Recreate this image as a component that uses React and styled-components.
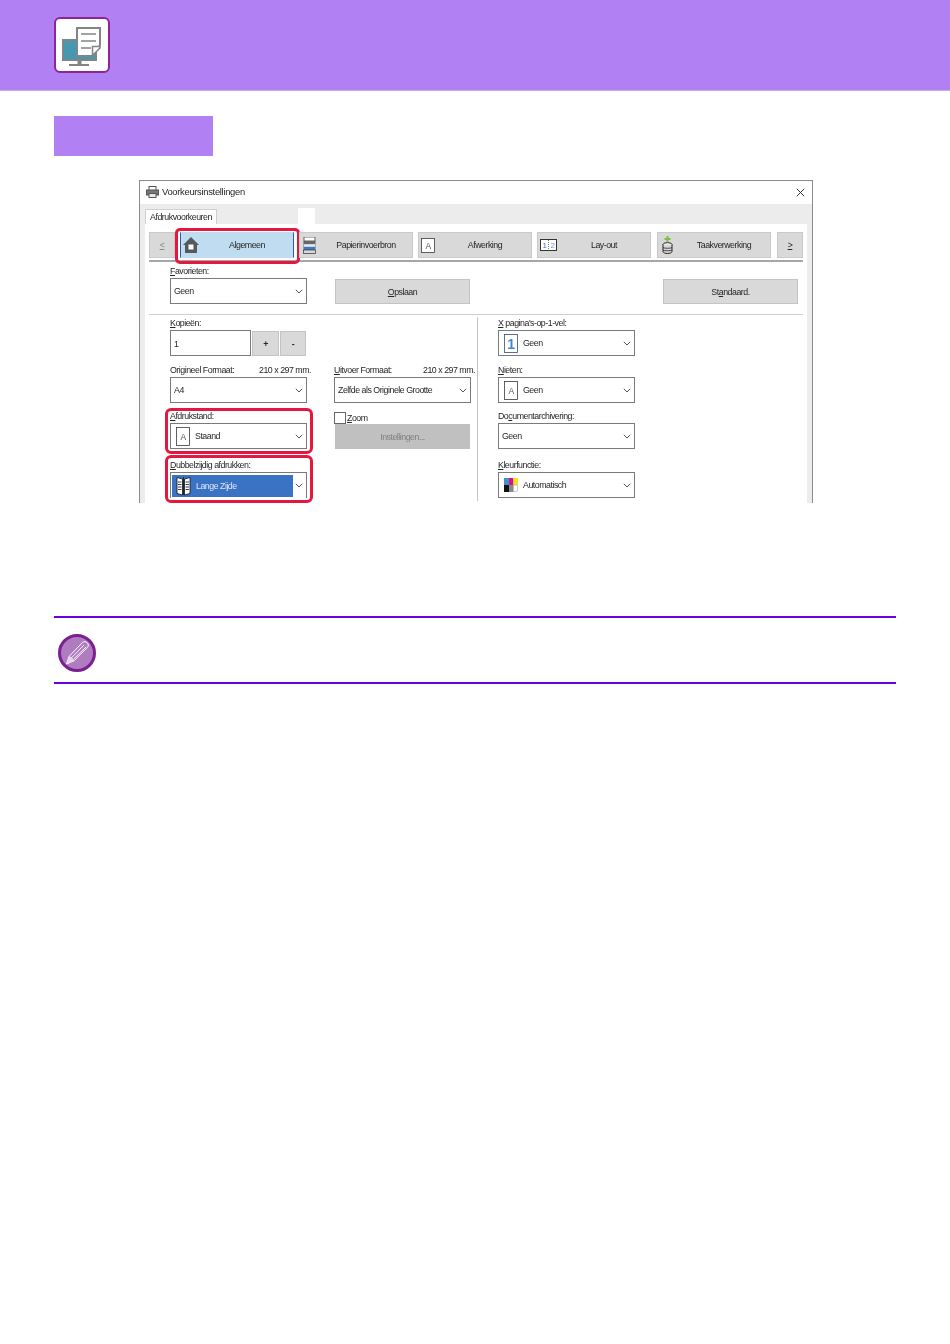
import styled, { createGlobalStyle } from "styled-components";

const GlobalStyle = createGlobalStyle`
html,body{margin:0;padding:0;background:#fff;}
body{font-family:"Liberation Sans",Arial,sans-serif;}
`
const Page = styled.div`
width:950px;
height:1344px;
overflow:hidden;
display:flex;
flex-direction:column;
`
const Header = styled.header`
height:91px;
box-sizing:border-box;
flex:none;
background:#b180f2;
border-bottom:1px solid #cda9f7;
display:flex;
align-items:center;
padding:0 54px;
`
const HeaderBadge = styled.div`
width:56px;
height:56px;
box-sizing:border-box;
background:#fff;
border:2px solid #8f2496;
border-radius:6px;
overflow:hidden;
display:flex;
`
const SectionBar = styled.div`
flex:none;
width:159px;
height:40px;
margin:25px 0 0 54px;
background:#b180f2;
`
const Dialog = styled.div`
flex:none;
width:674px;
height:323px;
box-sizing:border-box;
margin:24px 0 0 139px;
border:1px solid #8c8c8c;
border-bottom:none;
background:#ececec;
overflow:hidden;
color:#262626;
font-size:8.8px;
letter-spacing:-.48px;
line-height:12px;
filter:blur(.3px);
`
const TitleBar = styled.div`
height:22px;
background:#fff;
display:flex;
align-items:center;
padding:0 7px 1px 6px;
gap:3px;
font-size:9.4px;
letter-spacing:-.3px;
`
const CloseMark = styled.div`
margin-left:auto;
display:flex;
`
const TabStrip = styled.div`
height:20px;
display:flex;
align-items:flex-end;
padding-left:5px;
`
const Tab = styled.div`
width:72px;
height:15px;
box-sizing:border-box;
background:#fff;
border:1px solid #d0d0d0;
border-bottom:none;
text-align:center;
line-height:14px;
`
const BlankTab = styled.div`
width:17px;
height:16px;
margin-left:81px;
background:#fff;
`
const Panel = styled.div`
width:662px;
height:280px;
margin-left:5px;
box-sizing:border-box;
background:#fff;
padding:8px 4px 0;
`
const ToolRow = styled.div`
display:flex;
gap:5px;
height:26px;
`
const ToolButton = styled.div`
position:relative;
width:${props => props.$narrow ? "26px" : "114px"};
box-sizing:border-box;
margin-left:${props => props.$push ? "1px" : "0"};
padding-left:${props => props.$narrow ? "0" : "2px"};
display:flex;
align-items:center;
justify-content:center;
background:${props => props.$active ? "#bfdcf0" : "#d9d9d9"};
border:1px solid ${props => props.$active ? "#bfdcf0" : "#c9c9c9"};
border-left-color:${props => props.$active ? "#2f5f96" : "#c9c9c9"};
border-right-color:${props => props.$active ? "#2f5f96" : "#c9c9c9"};
color:${props => props.$dim ? "#8a8a8a" : "#262626"};
${props => props.$active && `
&::after{
   content:"";
   position:absolute;
   left:-6px;
   right:-7px;
   top:-5px;
   bottom:-7px;
   border:3px solid #e4173f;
   border-radius:5px;
   pointer-events:none;
}`}
`
const ToolIcon = styled.div`
width:18px;
box-sizing:border-box;
padding-left:${props => props.$inset || "0"};
flex:none;
display:flex;
justify-content:flex-start;
`
const ToolLabel = styled.span`
flex:1;
text-align:center;
`
const Rule = styled.div`
height:${props => props.$heavy ? "2px" : "1px"};
margin-top:${props => props.$heavy ? "2px" : "10px"};
background:${props => props.$heavy ? "#a6a6a6" : "#cfcfcf"};
`
const FavRow = styled.div`
display:flex;
align-items:flex-end;
margin-top:3px;
padding:0 5px 0 21px;
`
const FavSlot = styled.div`
width:137px;
flex:none;
`
const Columns = styled.div`
display:flex;
margin-top:2px;
padding-left:21px;
`
const LeftArea = styled.div`
display:grid;
grid-template-columns:137px 137px;
grid-template-rows:47px 46px 49px 45px;
column-gap:27px;
align-items:start;
width:307px;
height:184px;
border-right:1px solid #c4c4c4;
`
const RightArea = styled.div`
display:grid;
grid-template-rows:47px 46px 49px 45px;
align-items:start;
width:137px;
margin-left:20px;
`
const Field = styled.div`
position:relative;
${props => props.$marked && `
&::after{
   content:"";
   position:absolute;
   left:-5px;
   right:-6px;
   top:${props.$markTop || "-2px"};
   bottom:-5px;
   border:3px solid #e4173f;
   border-radius:6px;
   pointer-events:none;
}`}
`
const FieldLabel = styled.div`
height:13px;
width:${props => props.$wide ? "141px" : "auto"};
display:flex;
justify-content:space-between;
white-space:nowrap;
`
const Select = styled.div`
height:26px;
box-sizing:border-box;
display:flex;
align-items:center;
padding:${props => props.$cut ? "1px 3px 1px 1px" : "0 3px"};
gap:5px;
background:#fff;
border:1px solid #7a7a7a;
${props => props.$cut && "border-bottom:none;"}
`
const SelectValue = styled.div`
flex:1;
height:100%;
display:flex;
align-items:center;
gap:5px;
padding-left:${props => props.$icon ? "2px" : "0"};
white-space:nowrap;
${props => props.$selected && `
background:#3a72c4;
color:#dfe8f6;
height:22px;
margin-right:-3px;
padding-left:4px;
`}
`
const Spin = styled.div`
display:flex;
gap:1px;
`
const CountInput = styled.div`
width:81px;
height:26px;
box-sizing:border-box;
border:1px solid #7a7a7a;
padding:2px 3px 0;
display:flex;
align-items:center;
`
const SpinButton = styled.div`
width:${props => props.$w || "27px"};
height:25px;
margin-top:1px;
box-sizing:border-box;
background:#d9d9d9;
border:1px solid #c4c4c4;
display:flex;
align-items:center;
justify-content:center;
font-weight:bold;
`
const ActionButton = styled.div`
width:135px;
height:25px;
margin:${props => props.$margin || "0"};
box-sizing:border-box;
flex:none;
background:${props => props.$disabled ? "#c0c0c0" : "#d9d9d9"};
border:1px solid ${props => props.$disabled ? "#c0c0c0" : "#c4c4c4"};
color:${props => props.$disabled ? "#808080" : "#262626"};
display:flex;
align-items:center;
justify-content:center;
`
const CheckRow = styled.div`
height:13px;
display:flex;
align-items:center;
gap:1px;
margin-top:1px;
`
const CheckBox = styled.span`
width:10px;
height:10px;
border:1px solid #666;
background:#fff;
`
const Key = styled.span`
text-decoration:underline;
`
const Note = styled.div`
flex:none;
width:842px;
height:68px;
box-sizing:border-box;
margin:113px 0 0 54px;
border-top:2px solid #6a00e0;
border-bottom:2px solid #6a00e0;
display:flex;
align-items:center;
padding:6px 0 0 4px;
`

function Chevron() {
   return (
      <svg width="8" height="5" viewBox="0 0 8 5" style={{ flex: "none" }}>
         <path d="M.8.8 4 4 7.2.8" fill="none" stroke="#555" strokeWidth="1" />
      </svg>
   )
}

function HeaderIcon() {
   return (
      <svg width="52" height="52" viewBox="2 2 52 52">
         <rect x="9" y="23" width="33" height="20" fill="#4499b0" stroke="#808587" strokeWidth="2" />
         <rect x="23.5" y="44" width="4" height="3" fill="#808587" />
         <rect x="15" y="47" width="20" height="2" fill="#808587" />
         <path d="M23 11h23v17l-8 11H23z" fill="#fff" stroke="#808587" strokeWidth="2" />
         <path d="M27 17h15M27 24h15M27 31h10" stroke="#808587" strokeWidth="1.5" />
         <path d="M38.500 29.500h7.500v1.500l-6 6h-1.500z" fill="#fff" stroke="#808587" strokeWidth="1.500" />
      </svg>
   )
}

function PrinterIcon() {
   return (
      <svg width="13" height="12" viewBox="0 0 13 12" style={{ flex: "none" }}>
         <rect x="3" y="0.500" width="7" height="4" fill="#fff" stroke="#555" />
         <rect x="0.500" y="4" width="12" height="5" fill="#777" stroke="#555" />
         <rect x="3" y="7.500" width="7" height="4" fill="#e8e8e8" stroke="#555" />
      </svg>
   )
}

function CloseIcon() {
   return (
      <svg width="9" height="9" viewBox="0 0 9 9">
         <path d="M.8.8l7.400 7.400M8.200.8 .8 8.200" stroke="#333" strokeWidth="1" />
      </svg>
   )
}

function HomeIcon() {
   return (
      <svg width="16" height="16" viewBox="0 0 16 16">
         <path d="M8 0 16 8h-2v8H2V8H0z" fill="#55585c" />
         <rect x="5.500" y="7.500" width="5" height="5" fill="#fff" />
      </svg>
   )
}

function PaperIcon() {
   return (
      <svg width="13" height="17" viewBox="0 0 13 17">
         <rect x="1" y="0" width="11" height="4" fill="#fff" stroke="#444" strokeWidth=".8" />
         <rect x="0.500" y="4" width="12" height="3" fill="#666" />
         <rect x="0.500" y="7" width="12" height="3" fill="#e8edf2" stroke="#777" strokeWidth=".5" />
         <rect x="0.500" y="10" width="12" height="3" fill="#3f78c0" />
         <rect x="0.500" y="13" width="12" height="3.500" fill="#d8d8d8" stroke="#444" strokeWidth=".8" />
      </svg>
   )
}

function LetterPage({ width = 14, height = 19 }) {
   return (
      <svg width={width} height={height} viewBox={`0 0 14 ${height}`} style={{ flex: "none" }}>
         <rect x=".5" y=".5" width="13" height={height - 1} fill="#fff" stroke="#3a3a3a" strokeWidth=".8" />
         <text x="7" y={height / 2 + 3} textAnchor="middle" fontSize="8.500" fill="#555" fontFamily="Liberation Sans">A</text>
      </svg>
   )
}

function LayoutIcon() {
   return (
      <svg width="17" height="12" viewBox="0 0 17 12">
         <rect x=".5" y=".5" width="16" height="11" fill="#fff" stroke="#333" />
         <path d="M8.500 1v10" stroke="#777" strokeWidth="1" strokeDasharray="1 1" />
         <text x="4.500" y="9" textAnchor="middle" fontSize="8" fill="#3a72c4" fontFamily="Liberation Sans">1</text>
         <text x="12.500" y="9" textAnchor="middle" fontSize="8" fill="#6a9ad8" fontFamily="Liberation Sans">2</text>
      </svg>
   )
}

function JobIcon() {
   return (
      <svg width="11" height="18" viewBox="0 0 11 18">
         <path d="M5.500 0v6M2.500 3h6" stroke="#7ac143" strokeWidth="2" />
         <ellipse cx="5.500" cy="8.500" rx="4.500" ry="1.800" fill="#fff" stroke="#222" />
         <path d="M1 8.500v7c0 1 2 2 4.500 2s4.500-1 4.500-2v-7" fill="#d8d8d8" stroke="#222" />
         <path d="M1 11.500c1 1 8 1 9 0M1 14c1 1 8 1 9 0" fill="none" stroke="#222" strokeWidth=".8" />
      </svg>
   )
}

function DuplexIcon() {
   return (
      <svg width="15" height="20" viewBox="0 0 15 20" style={{ flex: "none" }}>
         <path d="M1 1.500 6.500 3v16L1 17.500zM14 1.500 8.500 3v16l5.500-1.500z" fill="#fff" stroke="#111" strokeWidth=".8" />
         <path d="M2 6h3.500M2 8.500h3.500M2 11h3.500M2 13.500h3.500M9.500 6H13M9.500 8.500H13M9.500 11H13M9.500 13.500H13" stroke="#111" strokeWidth=".8" />
         <path d="M7.500 1v18" stroke="#111" strokeWidth=".8" />
      </svg>
   )
}

function OnePageIcon() {
   return (
      <svg width="14" height="19" viewBox="0 0 14 19" style={{ flex: "none" }}>
         <rect x=".5" y=".5" width="13" height="18" fill="#fff" stroke="#35506e" strokeWidth=".8" />
         <text x="7" y="15" textAnchor="middle" fontSize="14" fontWeight="bold" fill="#3f86d6" fontFamily="Liberation Sans">1</text>
      </svg>
   )
}

function ColorIcon() {
   return (
      <svg width="14" height="14" viewBox="0 0 14 14" style={{ flex: "none" }}>
         <rect width="5" height="7" fill="#3f8fd6" />
         <rect x="5" width="4.500" height="7" fill="#e0107f" />
         <rect x="9.500" width="4.500" height="7" fill="#f2e421" />
         <rect y="7" width="5" height="7" fill="#111" />
         <rect x="5" y="7" width="4.500" height="7" fill="#888" />
         <rect x="9.500" y="7" width="4" height="6.500" fill="#fff" stroke="#999" strokeWidth=".5" />
      </svg>
   )
}

function PencilBadge() {
   return (
      <svg width="38" height="38" viewBox="0 0 38 38">
         <circle cx="19" cy="19" r="17.500" fill="#b07cc0" stroke="#7c1f90" strokeWidth="3" />
         <path d="M8.500 30 11 22.500 24.500 8.500c1.500-1.200 3.500-1 4.800.3 1.300 1.400 1.300 3.200.2 4.500L16 26.800z" fill="#b07cc0" stroke="#fff" strokeWidth="1" strokeLinejoin="round" />
         <path d="M13.500 23.800 26 11M15.500 25.200 28 13M12 22.500l4 4.300" fill="none" stroke="#fff" strokeWidth=".9" />
         <path d="M11 22.500c2.200.3 4.300 2 5 4.300l-7.500 3.200z" fill="#e6d4ec" />
      </svg>
   )
}

function SelectField({ label, icon, value, marked, markTop, cut, selected, dim }) {
   return (
      <Field $marked={marked} $markTop={markTop}>
         <FieldLabel $wide={!!dim}>
            <span>{label}</span>
            {dim && <span>{dim}</span>}
         </FieldLabel>
         <Select $cut={cut}>
            <SelectValue $icon={!!icon} $selected={selected}>
               {icon}
               {value}
            </SelectValue>
            <Chevron />
         </Select>
      </Field>
   )
}

export default function App() {
   return (
      <Page>
         <GlobalStyle />
         <Header>
            <HeaderBadge>
               <HeaderIcon />
            </HeaderBadge>
         </Header>
         <SectionBar />
         <Dialog>
            <TitleBar>
               <PrinterIcon />
               <span>Voorkeursinstellingen</span>
               <CloseMark>
                  <CloseIcon />
               </CloseMark>
            </TitleBar>
            <TabStrip>
               <Tab>Afdrukvoorkeuren</Tab>
               <BlankTab />
            </TabStrip>
            <Panel>
               <ToolRow>
                  <ToolButton $narrow $dim><Key>&lt;</Key></ToolButton>
                  <ToolButton $active>
                     <ToolIcon><HomeIcon /></ToolIcon>
                     <ToolLabel>Algemeen</ToolLabel>
                  </ToolButton>
                  <ToolButton>
                     <ToolIcon $inset="1px"><PaperIcon /></ToolIcon>
                     <ToolLabel>Papierinvoerbron</ToolLabel>
                  </ToolButton>
                  <ToolButton>
                     <ToolIcon><LetterPage width={14} height={15} /></ToolIcon>
                     <ToolLabel>Afwerking</ToolLabel>
                  </ToolButton>
                  <ToolButton>
                     <ToolIcon><LayoutIcon /></ToolIcon>
                     <ToolLabel>Lay-out</ToolLabel>
                  </ToolButton>
                  <ToolButton $push>
                     <ToolIcon $inset="2px"><JobIcon /></ToolIcon>
                     <ToolLabel>Taakverwerking</ToolLabel>
                  </ToolButton>
                  <ToolButton $narrow $push><Key>&gt;</Key></ToolButton>
               </ToolRow>
               <Rule $heavy />
               <FavRow>
                  <FavSlot>
                     <SelectField label={<><Key>F</Key>avorieten:</>} value="Geen" />
                  </FavSlot>
                  <ActionButton $margin="0 0 0 28px"><span><Key>O</Key>pslaan</span></ActionButton>
                  <ActionButton $margin="0 0 0 auto"><span>St<Key>a</Key>ndaard.</span></ActionButton>
               </FavRow>
               <Rule />
               <Columns>
                  <LeftArea>
                     <Field>
                        <FieldLabel><span><Key>K</Key>opieën:</span></FieldLabel>
                        <Spin>
                           <CountInput>1</CountInput>
                           <SpinButton>+</SpinButton>
                           <SpinButton $w="26px">-</SpinButton>
                        </Spin>
                     </Field>
                     <div />
                     <SelectField label="Origineel Formaat:" dim="210 x 297 mm." value="A4" />
                     <SelectField label={<><Key>U</Key>itvoer Formaat:</>} dim="210 x 297 mm." value="Zelfde als Originele Grootte" />
                     <SelectField label={<><Key>A</Key>fdrukstand:</>} icon={<LetterPage />} value="Staand" marked />
                     <Field>
                        <CheckRow>
                           <CheckBox />
                           <span><Key>Z</Key>oom</span>
                        </CheckRow>
                        <ActionButton $disabled $margin="0 0 0 1px">Instellingen...</ActionButton>
                     </Field>
                     <SelectField label={<><Key>D</Key>ubbelzijdig afdrukken:</>} icon={<DuplexIcon />} value="Lange Zijde" marked markTop="-4px" cut selected />
                  </LeftArea>
                  <RightArea>
                     <SelectField label={<><Key>X</Key> pagina's-op-1-vel:</>} icon={<OnePageIcon />} value="Geen" />
                     <SelectField label={<><Key>N</Key>ieten:</>} icon={<LetterPage />} value="Geen" />
                     <SelectField label={<>Do<Key>c</Key>umentarchivering:</>} value="Geen" />
                     <SelectField label={<><Key>K</Key>leurfunctie:</>} icon={<ColorIcon />} value="Automatisch" />
                  </RightArea>
               </Columns>
            </Panel>
         </Dialog>
         <Note>
            <PencilBadge />
         </Note>
      </Page>
   )
}
